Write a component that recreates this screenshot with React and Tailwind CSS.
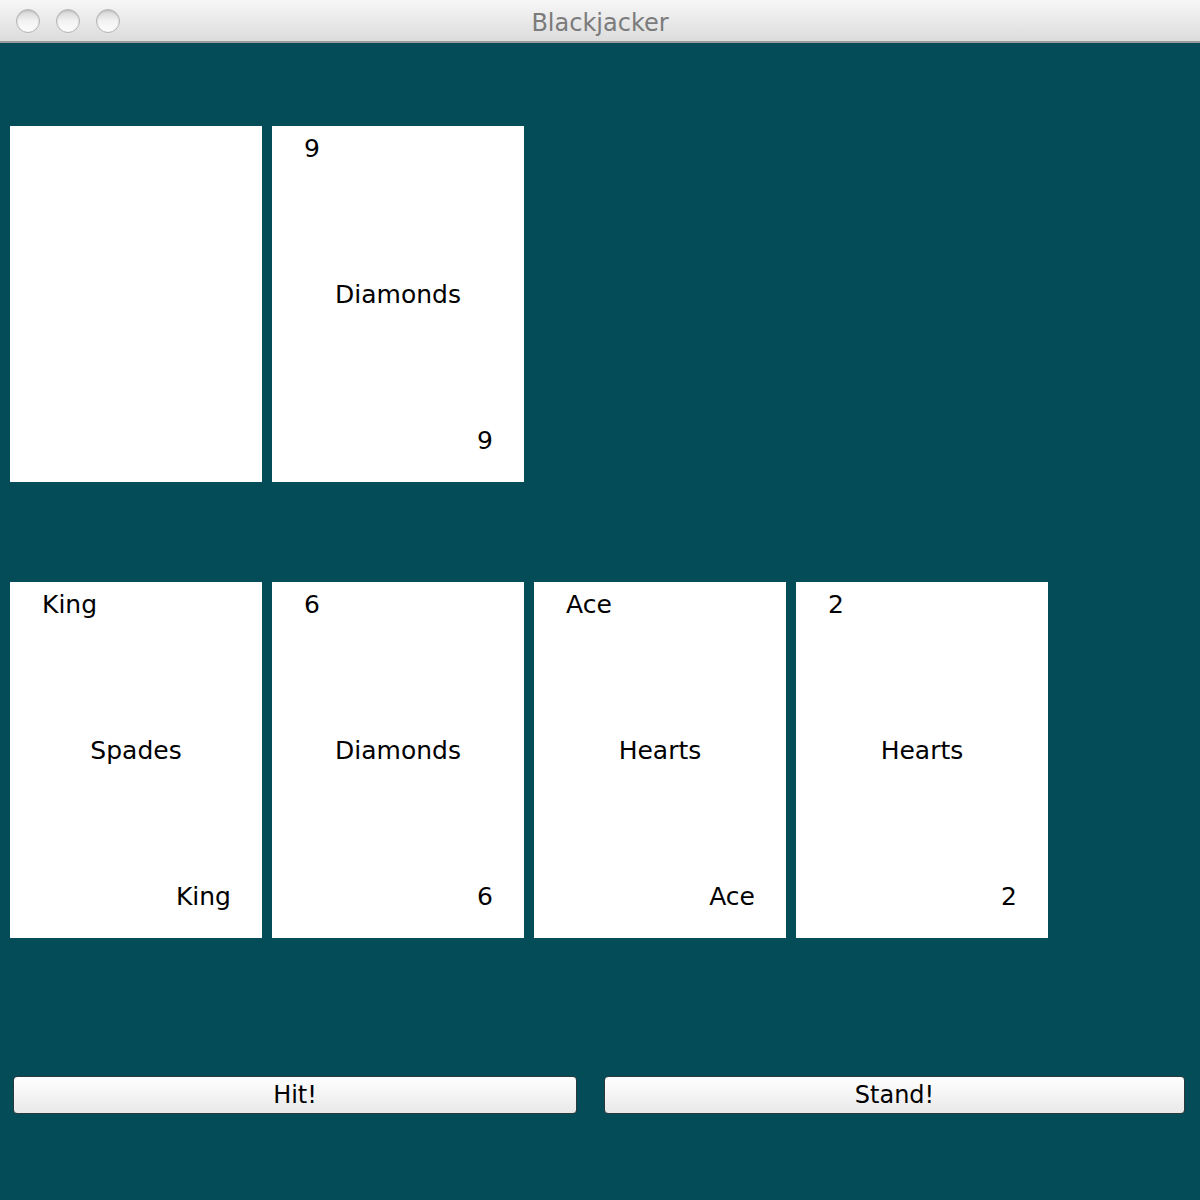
import React from 'react';

const dealer = [null, { rank: '9', suit: 'Diamonds' }];
const player = [
  { rank: 'King', suit: 'Spades' },
  { rank: '6', suit: 'Diamonds' },
  { rank: 'Ace', suit: 'Hearts' },
  { rank: '2', suit: 'Hearts' }
];

const Card = ({ card }) => (
  <div className="w-[252px] h-[356px] bg-white flex flex-col pt-[8px] pb-[27px] text-[25px] leading-[28px] text-black">
    {card && (
      <>
        <div className="h-[28px] pl-[32px] pt-[1px]">{card.rank}</div>
        <div className="flex-1 flex items-center justify-center">{card.suit}</div>
        <div className="h-[28px] pr-[31px] text-right">{card.rank}</div>
      </>
    )}
  </div>
);

const Light = () => (
  <div className="w-[24px] h-[24px] rounded-full border border-[#b4b4b4] bg-gradient-to-b from-[#d4d4d4] via-[#f2f2f2] to-[#fdfdfd] shadow-[inset_0_1px_2px_rgba(0,0,0,0.15)]" />
);

const App = () => {
  return (
    <div
      className="w-[1200px] h-[1200px] bg-[#044d58] flex flex-col"
      style={{ fontFamily: '"DejaVu Sans", "Lucida Grande", sans-serif' }}
    >
      <div className="relative h-[43px] shrink-0 bg-gradient-to-b from-[#f7f7f7] to-[#dcdcdc] border-b-2 border-[#9c9c9c] flex items-center">
        <div className="flex gap-[16px] pl-[16px]">
          <Light />
          <Light />
          <Light />
        </div>
        <div className="absolute inset-0 flex items-center justify-center text-[24px] text-[#7b7b7b] pt-[4px]">
          Blackjacker
        </div>
      </div>

      <div className="flex gap-[10px] pl-[10px] pt-[83px]">
        {dealer.map((c, i) => (
          <Card key={i} card={c} />
        ))}
      </div>

      <div className="flex gap-[10px] pl-[10px] pt-[100px]">
        {player.map((c, i) => (
          <Card key={i} card={c} />
        ))}
      </div>

      <div className="flex gap-[27px] pl-[13px] pt-[138px]">
        <button className="w-[564px] h-[38px] rounded-[4px] border border-[#2a3a3c] bg-gradient-to-b from-white via-[#f4f4f4] to-[#e9e9e9] text-[24px] text-black leading-none">
          Hit!
        </button>
        <button className="w-[581px] h-[38px] rounded-[4px] border border-[#2a3a3c] bg-gradient-to-b from-white via-[#f4f4f4] to-[#e9e9e9] text-[24px] text-black leading-none">
          Stand!
        </button>
      </div>
    </div>
  );
};

export default App;
